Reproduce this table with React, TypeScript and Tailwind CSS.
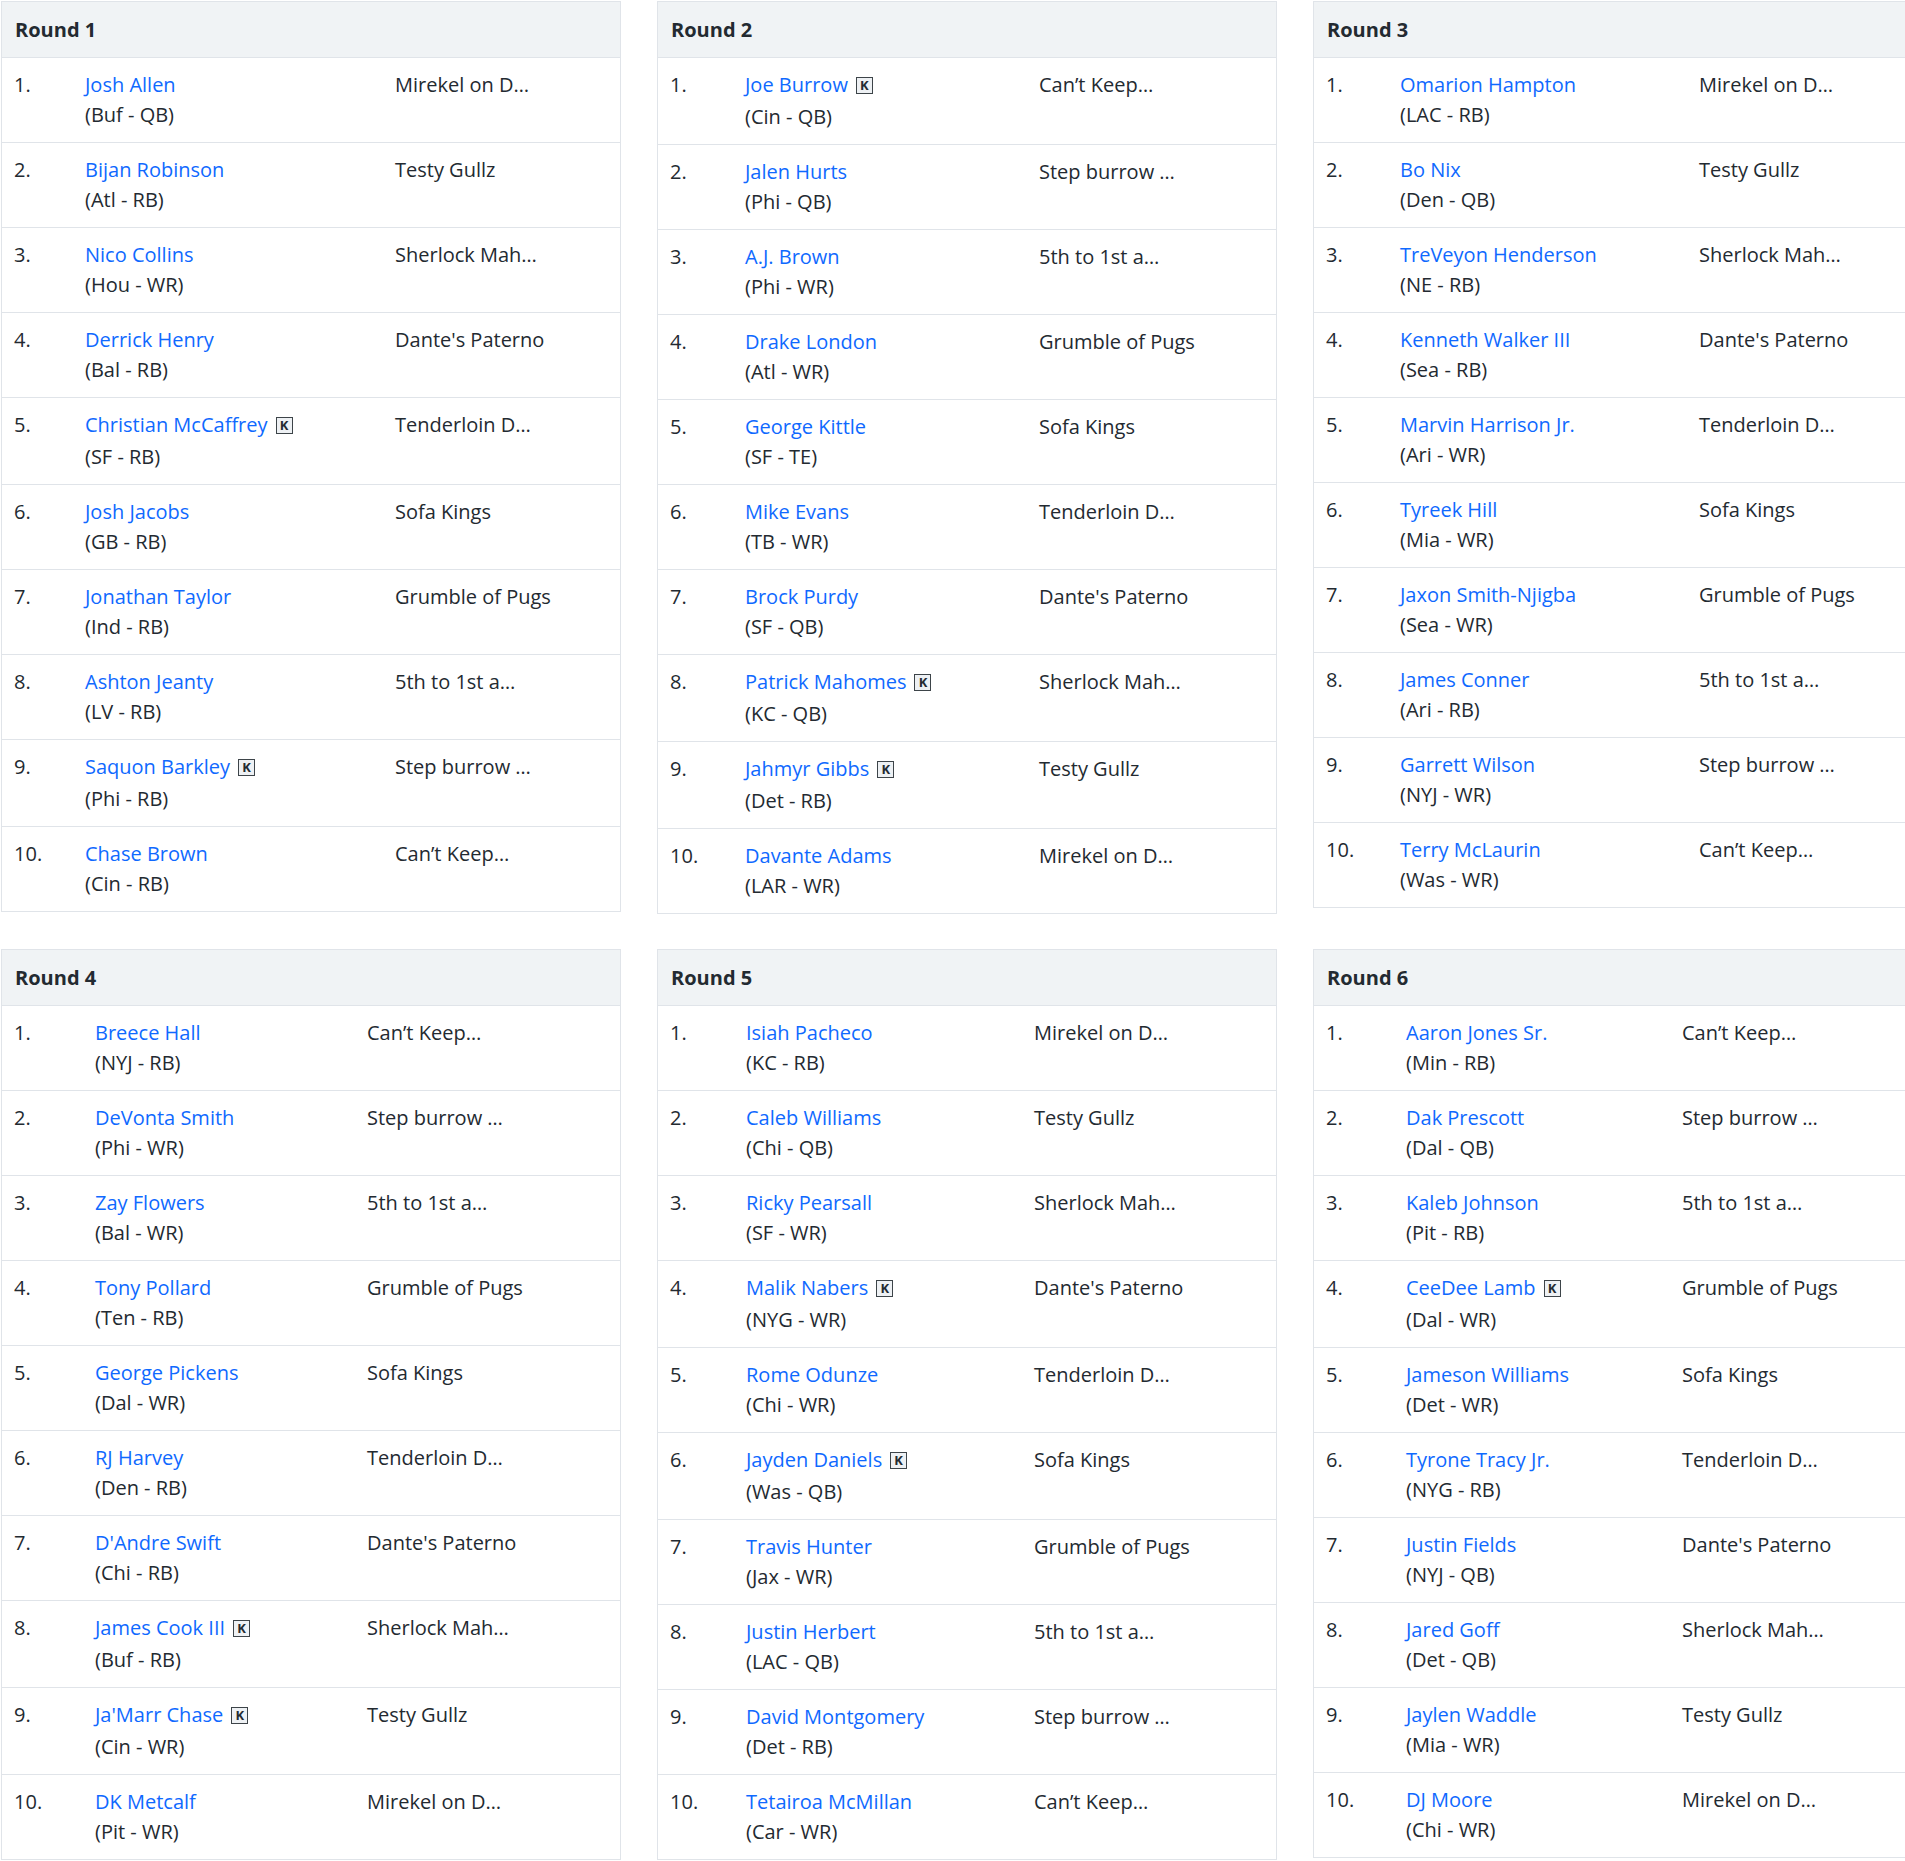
type Pick = {
  name: string;
  team: string;
  owner: string;
  keeper?: boolean;
};

type Round = {
  title: string;
  cols: string;
  picks: Pick[];
};

const rounds: Round[] = [
  {
    title: "Round 1",
    cols: "grid-cols-[71px_310px_1fr]",
    picks: [
      { name: "Josh Allen", team: "(Buf - QB)", owner: "Mirekel on D…" },
      { name: "Bijan Robinson", team: "(Atl - RB)", owner: "Testy Gullz" },
      { name: "Nico Collins", team: "(Hou - WR)", owner: "Sherlock Mah…" },
      { name: "Derrick Henry", team: "(Bal - RB)", owner: "Dante's Paterno" },
      { name: "Christian McCaffrey", team: "(SF - RB)", owner: "Tenderloin D…", keeper: true },
      { name: "Josh Jacobs", team: "(GB - RB)", owner: "Sofa Kings" },
      { name: "Jonathan Taylor", team: "(Ind - RB)", owner: "Grumble of Pugs" },
      { name: "Ashton Jeanty", team: "(LV - RB)", owner: "5th to 1st a…" },
      { name: "Saquon Barkley", team: "(Phi - RB)", owner: "Step burrow …", keeper: true },
      { name: "Chase Brown", team: "(Cin - RB)", owner: "Can’t Keep…" },
    ],
  },
  {
    title: "Round 2",
    cols: "grid-cols-[75px_294px_1fr]",
    picks: [
      { name: "Joe Burrow", team: "(Cin - QB)", owner: "Can’t Keep…", keeper: true },
      { name: "Jalen Hurts", team: "(Phi - QB)", owner: "Step burrow …" },
      { name: "A.J. Brown", team: "(Phi - WR)", owner: "5th to 1st a…" },
      { name: "Drake London", team: "(Atl - WR)", owner: "Grumble of Pugs" },
      { name: "George Kittle", team: "(SF - TE)", owner: "Sofa Kings" },
      { name: "Mike Evans", team: "(TB - WR)", owner: "Tenderloin D…" },
      { name: "Brock Purdy", team: "(SF - QB)", owner: "Dante's Paterno" },
      { name: "Patrick Mahomes", team: "(KC - QB)", owner: "Sherlock Mah…", keeper: true },
      { name: "Jahmyr Gibbs", team: "(Det - RB)", owner: "Testy Gullz", keeper: true },
      { name: "Davante Adams", team: "(LAR - WR)", owner: "Mirekel on D…" },
    ],
  },
  {
    title: "Round 3",
    cols: "grid-cols-[74px_299px_1fr]",
    picks: [
      { name: "Omarion Hampton", team: "(LAC - RB)", owner: "Mirekel on D…" },
      { name: "Bo Nix", team: "(Den - QB)", owner: "Testy Gullz" },
      { name: "TreVeyon Henderson", team: "(NE - RB)", owner: "Sherlock Mah…" },
      { name: "Kenneth Walker III", team: "(Sea - RB)", owner: "Dante's Paterno" },
      { name: "Marvin Harrison Jr.", team: "(Ari - WR)", owner: "Tenderloin D…" },
      { name: "Tyreek Hill", team: "(Mia - WR)", owner: "Sofa Kings" },
      { name: "Jaxon Smith-Njigba", team: "(Sea - WR)", owner: "Grumble of Pugs" },
      { name: "James Conner", team: "(Ari - RB)", owner: "5th to 1st a…" },
      { name: "Garrett Wilson", team: "(NYJ - WR)", owner: "Step burrow …" },
      { name: "Terry McLaurin", team: "(Was - WR)", owner: "Can’t Keep…" },
    ],
  },
  {
    title: "Round 4",
    cols: "grid-cols-[81px_272px_1fr]",
    picks: [
      { name: "Breece Hall", team: "(NYJ - RB)", owner: "Can’t Keep…" },
      { name: "DeVonta Smith", team: "(Phi - WR)", owner: "Step burrow …" },
      { name: "Zay Flowers", team: "(Bal - WR)", owner: "5th to 1st a…" },
      { name: "Tony Pollard", team: "(Ten - RB)", owner: "Grumble of Pugs" },
      { name: "George Pickens", team: "(Dal - WR)", owner: "Sofa Kings" },
      { name: "RJ Harvey", team: "(Den - RB)", owner: "Tenderloin D…" },
      { name: "D'Andre Swift", team: "(Chi - RB)", owner: "Dante's Paterno" },
      { name: "James Cook III", team: "(Buf - RB)", owner: "Sherlock Mah…", keeper: true },
      { name: "Ja'Marr Chase", team: "(Cin - WR)", owner: "Testy Gullz", keeper: true },
      { name: "DK Metcalf", team: "(Pit - WR)", owner: "Mirekel on D…" },
    ],
  },
  {
    title: "Round 5",
    cols: "grid-cols-[76px_288px_1fr]",
    picks: [
      { name: "Isiah Pacheco", team: "(KC - RB)", owner: "Mirekel on D…" },
      { name: "Caleb Williams", team: "(Chi - QB)", owner: "Testy Gullz" },
      { name: "Ricky Pearsall", team: "(SF - WR)", owner: "Sherlock Mah…" },
      { name: "Malik Nabers", team: "(NYG - WR)", owner: "Dante's Paterno", keeper: true },
      { name: "Rome Odunze", team: "(Chi - WR)", owner: "Tenderloin D…" },
      { name: "Jayden Daniels", team: "(Was - QB)", owner: "Sofa Kings", keeper: true },
      { name: "Travis Hunter", team: "(Jax - WR)", owner: "Grumble of Pugs" },
      { name: "Justin Herbert", team: "(LAC - QB)", owner: "5th to 1st a…" },
      { name: "David Montgomery", team: "(Det - RB)", owner: "Step burrow …" },
      { name: "Tetairoa McMillan", team: "(Car - WR)", owner: "Can’t Keep…" },
    ],
  },
  {
    title: "Round 6",
    cols: "grid-cols-[80px_276px_1fr]",
    picks: [
      { name: "Aaron Jones Sr.", team: "(Min - RB)", owner: "Can’t Keep…" },
      { name: "Dak Prescott", team: "(Dal - QB)", owner: "Step burrow …" },
      { name: "Kaleb Johnson", team: "(Pit - RB)", owner: "5th to 1st a…" },
      { name: "CeeDee Lamb", team: "(Dal - WR)", owner: "Grumble of Pugs", keeper: true },
      { name: "Jameson Williams", team: "(Det - WR)", owner: "Sofa Kings" },
      { name: "Tyrone Tracy Jr.", team: "(NYG - RB)", owner: "Tenderloin D…" },
      { name: "Justin Fields", team: "(NYJ - QB)", owner: "Dante's Paterno" },
      { name: "Jared Goff", team: "(Det - QB)", owner: "Sherlock Mah…" },
      { name: "Jaylen Waddle", team: "(Mia - WR)", owner: "Testy Gullz" },
      { name: "DJ Moore", team: "(Chi - WR)", owner: "Mirekel on D…" },
    ],
  },
];

const KeeperBadge = () => (
  <span className="ml-2 mt-[7px] inline-flex h-[17px] w-[17px] items-center justify-center border-[1.5px] border-[#3d4449] bg-[#eef1f4] text-[13px] leading-none font-bold text-[#232a31]">
    K
  </span>
);

const RoundTable = ({ round }: { round: Round }) => (
  <div className="border border-[#e0e4e9] bg-white">
    <div className="flex h-[55px] items-center bg-[#f0f3f5] pl-[13px] text-[20px] font-bold text-[#232a31]">
      {round.title}
    </div>
    {round.picks.map((pick, i) => (
      <div
        key={pick.name}
        className={`grid ${round.cols} border-t border-[#e0e4e9] py-3 text-[20px] leading-[30px] text-[#232a31]`}
      >
        <div className="pl-3">{i + 1}.</div>
        <div className="pl-3">
          <div className={`flex items-start ${pick.keeper ? "h-[32px]" : "h-[30px]"}`}>
            <span className="text-[#0f69ff]">{pick.name}</span>
            {pick.keeper && <KeeperBadge />}
          </div>
          <div>{pick.team}</div>
        </div>
        <div className="pl-3 whitespace-nowrap">{pick.owner}</div>
      </div>
    ))}
  </div>
);

export default function App() {
  return (
    <div className="w-[1933px] bg-white pl-px pt-px font-['Open_Sans',sans-serif]">
      <div className="grid grid-cols-[620px_620px_620px] items-start gap-x-9 gap-y-[35px]">
        {rounds.map((round) => (
          <RoundTable key={round.title} round={round} />
        ))}
      </div>
    </div>
  );
}
